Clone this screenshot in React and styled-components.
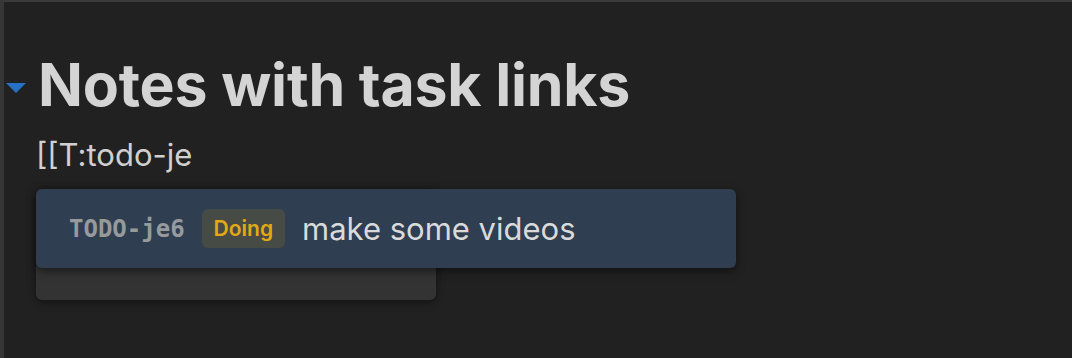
import React from 'react';
import styled, { createGlobalStyle } from 'styled-components';

const GlobalStyle = createGlobalStyle`
  html, body {
    margin: 0;
    padding: 0;
    background-color: #212121;
  }
  body {
    font-family: Inter, "Noto Sans", sans-serif;
  }
`;

const Window = styled.div`
  width: 1072px;
  height: 358px;
  box-sizing: border-box;
  background-color: #212121;
  border-top: 2px solid #3a3a3a;
  border-left: 4px solid #363636;
  overflow: hidden;
`;

const Editor = styled.div`
  display: flex;
  flex-direction: column;
  padding: 47px 0 0 2px;
`;

const HeadingRow = styled.div`
  display: flex;
  align-items: center;
  gap: 12px;
`;

const FoldArrow = styled.div`
  width: 0;
  height: 0;
  border-left: 10px solid transparent;
  border-right: 10px solid transparent;
  border-top: 10px solid #2671c5;
  margin-top: 6px;
`;

const Heading = styled.h1`
  margin: 0;
  font-size: 59px;
  font-weight: 700;
  line-height: 72px;
  color: #d4d4d4;
  letter-spacing: -0.2px;
`;

const Line = styled.div`
  margin: 14px 0 0 30px;
  font-size: 31px;
  line-height: 40px;
  color: #d0d0d0;
`;

const Suggest = styled.div`
  position: relative;
  margin: 14px 0 0 30px;
  width: 700px;
`;

const SuggestList = styled.div`
  width: 400px;
  height: 111px;
  border-radius: 6px;
  background-color: #333333;
  box-shadow: 0 2px 8px rgba(0, 0, 0, 0.45);
`;

const Card = styled.div`
  position: absolute;
  top: 0;
  left: 0;
  width: 700px;
  height: 79px;
  box-sizing: border-box;
  padding: 0 33px;
  display: flex;
  align-items: center;
  gap: 17px;
  border-radius: 6px;
  background-color: #2f3e51;
  box-shadow: 0 3px 10px rgba(0, 0, 0, 0.5);
`;

const TaskId = styled.span`
  font-family: "DejaVu Sans Mono", "Liberation Mono", monospace;
  font-weight: 700;
  font-size: 24px;
  color: #979a9d;
`;

const Badge = styled.span`
  display: inline-flex;
  align-items: center;
  height: 39px;
  padding: 0 12px;
  border-radius: 6px;
  background-color: ${p => p.$bg};
  color: ${p => p.$color};
  font-size: 21px;
  font-weight: 600;
`;

const Title = styled.span`
  font-size: 31px;
  color: #dadada;
`;

export default function App() {
  return (
    <>
      <GlobalStyle />
      <Window>
        <Editor>
          <HeadingRow>
            <FoldArrow />
            <Heading>Notes with task links</Heading>
          </HeadingRow>
          <Line>[[T:todo-je</Line>
          <Suggest>
            <SuggestList />
            <Card>
              <TaskId>TODO-je6</TaskId>
              <Badge $bg="#464b46" $color="#e3a915">Doing</Badge>
              <Title>make some videos</Title>
            </Card>
          </Suggest>
        </Editor>
      </Window>
    </>
  );
}
